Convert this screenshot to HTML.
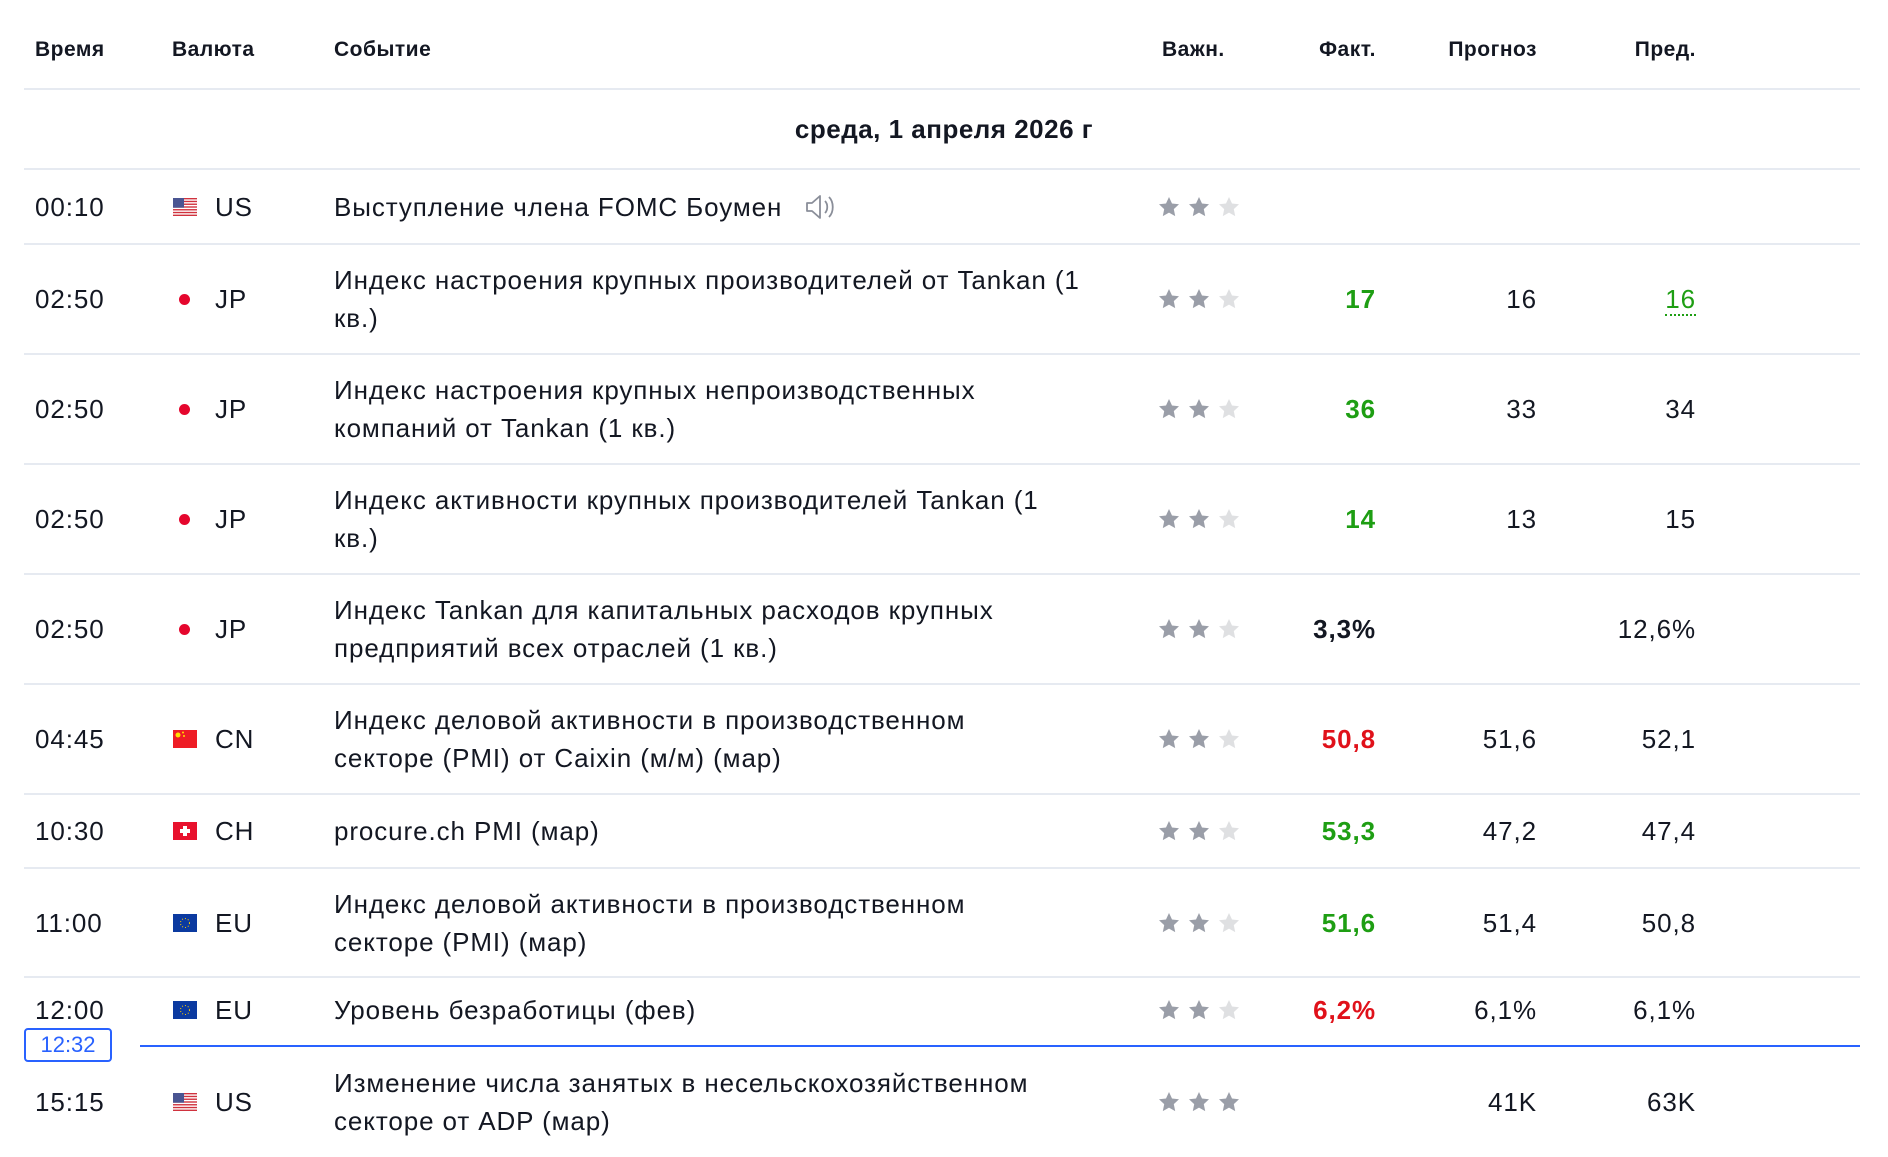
<!DOCTYPE html><html><head><meta charset="utf-8"><style>
body{margin:0;width:1888px;height:1154px;overflow:hidden;background:#fff;font-family:"Liberation Sans",sans-serif;color:#131722;position:relative}
.h{position:absolute;top:38px;font-size:21px;font-weight:bold;color:#131722;letter-spacing:0.5px}
.ln{position:absolute;left:24px;width:1836px;height:2px;background:#e6eaf1}
.r{position:absolute;left:0;width:1888px;display:flex;align-items:center;font-size:26px;letter-spacing:0.9px}
.t{position:absolute;left:35px}
.fl{position:absolute;left:173px;width:24px;height:18px}
.c{position:absolute;left:215px}
.e{position:absolute;left:334px;width:800px;line-height:38px;white-space:nowrap}
.st{position:absolute;left:1158px;display:flex;gap:8px}
.n{position:absolute;text-align:right;width:150px}
.a{right:512px;font-weight:bold}.p{right:351px}.v{right:192px}
.g{color:#1e9e13}.rd{color:#e0111a}
.dot{position:absolute;left:179px;width:11px;height:11px;border-radius:50%;background:#e5062d}
</style></head><body>
<div class="h" style="left:35px">Время</div><div class="h" style="left:172px">Валюта</div><div class="h" style="left:334px">Событие</div><div class="h" style="left:1162px">Важн.</div><div class="h" style="right:512px">Факт.</div><div class="h" style="right:351px">Прогноз</div><div class="h" style="right:192px">Пред.</div>
<div class="ln" style="top:88px"></div>
<div style="position:absolute;top:114px;left:0;width:1888px;text-align:center;font-size:26px;font-weight:bold;letter-spacing:0.5px">среда, 1 апреля 2026 г</div>
<div class="ln" style="top:168px"></div>
<div class="ln" style="top:243px"></div><div class="ln" style="top:353px"></div><div class="ln" style="top:463px"></div><div class="ln" style="top:573px"></div><div class="ln" style="top:683px"></div><div class="ln" style="top:793px"></div><div class="ln" style="top:867px"></div><div class="ln" style="top:976px"></div>
<div style="position:absolute;left:140px;top:1045px;width:1720px;height:2px;background:#2962ff"></div>
<div style="position:absolute;left:24px;top:1028px;width:84px;height:30px;border:2px solid #2962ff;border-radius:4px;background:#fff;color:#2962ff;font-size:22px;text-align:center;line-height:30px">12:32</div>
<svg width="0" height="0" style="position:absolute"><defs><path id="s" d="M11 1l3 6.5 7 .8-5.2 4.8 1.4 7L11 16.6 4.8 20.1l1.4-7L1 8.3l7-.8z"/></defs></svg>
<script>
const star='<svg width="22" height="22"><use href="#s" fill="#9a9ea8"/></svg><svg width="22" height="22"><use href="#s" fill="#9a9ea8"/></svg><svg width="22" height="22"><use href="#s" fill="#dfe0e2"/></svg>';
const star3='<svg width="22" height="22"><use href="#s" fill="#9a9ea8"/></svg><svg width="22" height="22"><use href="#s" fill="#9a9ea8"/></svg><svg width="22" height="22"><use href="#s" fill="#9a9ea8"/></svg>';
const us='<svg class="fl" viewBox="0 0 24 18"><rect width="24" height="18" fill="#fff"/>'+[0,2,4,6,8,10,12].map(i=>`<rect y="${i*18/13}" width="24" height="${18/13}" fill="#d0323e"/>`).join('')+'<rect width="11" height="9.7" fill="#4a5592"/></svg>';
const jp='<div class="dot"></div>';
const cn='<svg class="fl" viewBox="0 0 24 18"><rect width="24" height="18" fill="#ee1c25"/><circle cx="5" cy="5" r="2.5" fill="#ffde00"/><circle cx="10" cy="2.5" r="1" fill="#ffde00"/><circle cx="11" cy="6" r="1" fill="#ffde00"/></svg>';
const ch='<svg class="fl" viewBox="0 0 24 18"><rect width="24" height="18" fill="#e8112d"/><rect x="10" y="4" width="4" height="10" fill="#fff"/><rect x="7" y="7" width="10" height="4" fill="#fff"/></svg>';
const eu='<svg class="fl" viewBox="0 0 24 18"><rect width="24" height="18" fill="#0b3aa0"/><circle cx="12" cy="9" r="4.5" fill="none" stroke="#ffcc00" stroke-width="1" stroke-dasharray="1 2"/></svg>';
const rows=[
[170,74,'00:10',us,'US','Выступление члена FOMC Боумен <svg width="34" height="30" viewBox="0 0 34 30" style="vertical-align:-6px;margin-left:14px"><path d="M3 11h5l8-7v22l-8-7H3z" fill="none" stroke="#8a8e99" stroke-width="1.8" stroke-linejoin="round"/><path d="M21 9c3 3 3 9 0 12M25 5c5 5 5 15 0 20" fill="none" stroke="#8a8e99" stroke-width="1.8"/></svg>',star,'','',''],
[244,110,'02:50',jp,'JP','Индекс настроения крупных производителей от Tankan (1<br>кв.)',star,'<span class="g">17</span>','16','<span class="g" style="border-bottom:2px dotted #1e9e13">16</span>'],
[354,110,'02:50',jp,'JP','Индекс настроения крупных непроизводственных<br>компаний от Tankan (1 кв.)',star,'<span class="g">36</span>','33','34'],
[464,110,'02:50',jp,'JP','Индекс активности крупных производителей Tankan (1<br>кв.)',star,'<span class="g">14</span>','13','15'],
[574,110,'02:50',jp,'JP','Индекс Tankan для капитальных расходов крупных<br>предприятий всех отраслей (1 кв.)',star,'3,3%','','12,6%'],
[684,110,'04:45',cn,'CN','Индекс деловой активности в производственном<br>секторе (PMI) от Caixin (м/м) (мар)',star,'<span class="rd">50,8</span>','51,6','52,1'],
[794,74,'10:30',ch,'CH','procure.ch PMI (мар)',star,'<span class="g">53,3</span>','47,2','47,4'],
[868,110,'11:00',eu,'EU','Индекс деловой активности в производственном<br>секторе (PMI) (мар)',star,'<span class="g">51,6</span>','51,4','50,8'],
[977,66,'12:00',eu,'EU','Уровень безработицы (фев)',star,'<span class="rd">6,2%</span>','6,1%','6,1%'],
[1047,110,'15:15',us,'US','Изменение числа занятых в несельскохозяйственном<br>секторе от ADP (мар)',star3,'','41K','63K']];
let h='';
for(const r of rows){h+=`<div class="r" style="top:${r[0]}px;height:${r[1]}px"><span class="t">${r[2]}</span>${r[3]}<span class="c">${r[4]}</span><span class="e">${r[5]}</span><span class="st">${r[6]}</span><span class="n a">${r[7]}</span><span class="n p">${r[8]}</span><span class="n v">${r[9]}</span></div>`}
document.write(h);
</script>
</body></html>
